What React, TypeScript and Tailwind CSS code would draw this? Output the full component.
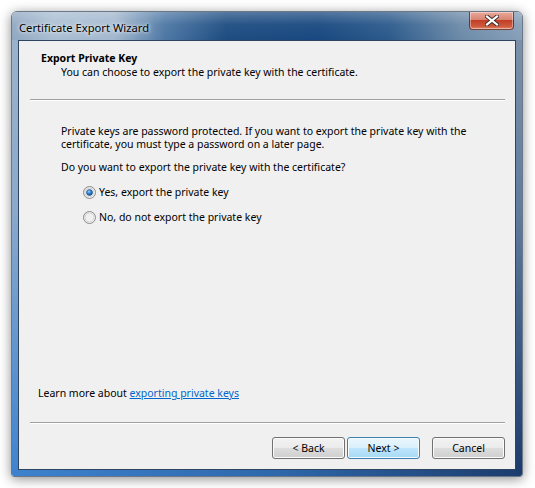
const FONT = "font-['Noto_Sans',sans-serif]"

function Radio({ checked }: { checked: boolean }) {
  return (
    <svg width="13" height="13" viewBox="0 0 13 13" className="shrink-0">
      <defs>
        <linearGradient id="rg-ring" x1="0" y1="0" x2="1" y2="1">
          <stop offset="0" stopColor="#e6e6e6" />
          <stop offset="1" stopColor="#ffffff" />
        </linearGradient>
        <radialGradient id="rg-dot" cx="0.4" cy="0.35" r="0.7">
          <stop offset="0" stopColor="#9ad2f4" />
          <stop offset="0.5" stopColor="#2a7fd1" />
          <stop offset="1" stopColor="#124b8c" />
        </radialGradient>
      </defs>
      <circle cx="6.5" cy="6.5" r="6" fill="url(#rg-ring)" stroke="#8a8a8a" strokeWidth="1" />
      <circle cx="6.5" cy="6.5" r="4.5" fill="#f0f0f0" stroke="#c9c9c9" strokeWidth="0.8" />
      {checked && <circle cx="6.5" cy="6.5" r="3" fill="url(#rg-dot)" stroke="#1d4f86" strokeWidth="0.6" />}
    </svg>
  )
}

function WinButton({ label, primary = false }: { label: string; primary?: boolean }) {
  return (
    <button
      className={`h-[22px] w-[73px] rounded-[3px] border text-[10.5px] leading-none text-black ${
        primary
          ? 'border-[#3c7fb1] bg-[linear-gradient(180deg,#eaf6fd_0%,#d9f0fc_50%,#bee6fd_50%,#a7d9f5_100%)] shadow-[inset_0_0_0_1px_#f6fbfe]'
          : 'border-[#707070] bg-[linear-gradient(180deg,#f2f2f2_0%,#ebebeb_50%,#dddddd_50%,#cfcfcf_100%)] shadow-[inset_0_0_0_1px_#fcfcfc]'
      }`}
    >
      {label}
    </button>
  )
}

function Etched() {
  return (
    <div className="ml-[11px] mr-[10px]">
      <div className="h-px bg-[#a0a0a0]" />
      <div className="h-px bg-white" />
    </div>
  )
}

export default function App() {
  return (
    <div className={`h-[488px] w-[535px] overflow-hidden bg-white pl-[11px] pt-[11px] ${FONT}`}>
      <div className="flex h-[466px] w-[512px] flex-col overflow-hidden rounded-t-[6px] rounded-b-[3px] border border-[#2c3e55]/70 shadow-[0_2px_12px_rgba(0,0,0,0.45)]">
        {/* title bar */}
        <div className="relative flex h-[28px] shrink-0 items-center bg-[linear-gradient(180deg,rgba(255,255,255,0.25)_0%,rgba(255,255,255,0.05)_45%,rgba(0,0,0,0)_100%),linear-gradient(90deg,#8fa7c1_0%,#a9bed3_8%,#a3b8ce_20%,#4d77a4_30%,#1d4c81_42%,#184880_60%,#2c5a8b_74%,#6c8aa8_88%,#879fb8_100%)] pl-[7px] pt-[4px]">
          <span className="text-[11.2px] text-black [text-shadow:0_0_6px_rgba(255,255,255,0.9),0_0_3px_rgba(255,255,255,0.8)]">
            Certificate Export Wizard
          </span>
          <div className="absolute right-[8px] top-[-1px] flex h-[19px] w-[45px] items-center justify-center rounded-b-[4px] border border-[#5a2a24]/80 bg-[linear-gradient(180deg,#e9a99c_0%,#d88472_45%,#c23f26_50%,#cf5a3f_85%,#e08a6a_100%)] shadow-[inset_0_0_0_1px_rgba(255,255,255,0.4)]">
            <svg width="14" height="11" viewBox="0 0 14 11">
              <path d="M2 1.5 L12 9.5 M12 1.5 L2 9.5" stroke="#3b2a2a" strokeWidth="4" strokeLinecap="square" />
              <path d="M2 1.5 L12 9.5 M12 1.5 L2 9.5" stroke="#ffffff" strokeWidth="2.2" strokeLinecap="square" />
            </svg>
          </div>
        </div>

        <div className="flex flex-1">
          <div className="w-[6px] bg-[linear-gradient(180deg,#9cb2ca_0%,#8aa9cb_40%,#3f84cf_100%)]" />
          {/* client */}
          <div className="flex w-[498px] flex-col border border-[#2d4560] bg-[#f0f0f0] text-[10.5px] leading-[13px] text-black">
            <div className="pl-[22px] pt-[11px]">
              <div className="font-bold">Export Private Key</div>
              <div className="mt-[1px] pl-[20px]">You can choose to export the private key with the certificate.</div>
            </div>
            <div className="mt-[20px]">
              <Etched />
            </div>
            <div className="flex flex-1 flex-col">
              <div className="pl-[42px] pt-[24px]">
                <p className="w-[420px]">
                  Private keys are password protected. If you want to export the private key with the
                  certificate, you must type a password on a later page.
                </p>
                <p className="mt-[10px]">Do you want to export the private key with the certificate?</p>
                <div className="mt-[12px] flex flex-col gap-[12px] pl-[22px]">
                  <label className="flex items-center gap-[3px]">
                    <Radio checked />
                    <span>Yes, export the private key</span>
                  </label>
                  <label className="flex items-center gap-[3px]">
                    <Radio checked={false} />
                    <span>No, do not export the private key</span>
                  </label>
                </div>
              </div>
              <div className="mt-auto pl-[19px]">
                Learn more about{' '}
                <a className="text-[#0066cc] underline">exporting private keys</a>
              </div>
            </div>
            <div className="mt-[22px]">
              <Etched />
            </div>
            <div className="mb-[10px] mr-[10px] mt-[13px] flex justify-end">
              <WinButton label="< Back" />
              <div className="ml-[2px]">
                <WinButton label="Next >" primary />
              </div>
              <div className="ml-[12px]">
                <WinButton label="Cancel" />
              </div>
            </div>
          </div>
          <div className="w-[6px] bg-[linear-gradient(180deg,#7b91aa_0%,#5f7c9e_40%,#1d3d6e_100%)]" />
        </div>
        <div className="h-[6px] shrink-0 bg-[linear-gradient(90deg,#3d82ce_0%,#2f69ad_50%,#1c3c6d_100%)]" />
      </div>
    </div>
  )
}
